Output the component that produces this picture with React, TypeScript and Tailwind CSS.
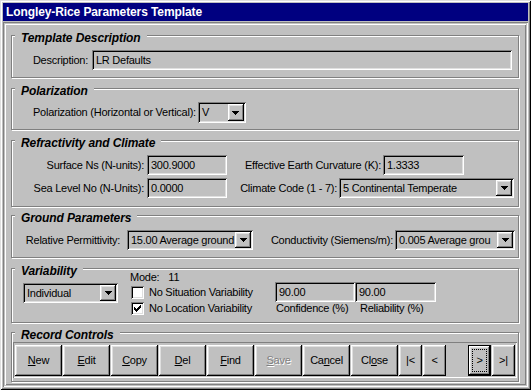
import React from 'react';

// win95 bevels
const raised = 'shadow-[inset_-1px_-1px_#000,inset_1px_1px_#fff,inset_-2px_-2px_#808080,inset_2px_2px_#dfdfdf]';
const sunken = 'shadow-[inset_1px_1px_#808080,inset_-1px_-1px_#fff,inset_2px_2px_#000,inset_-2px_-2px_#dfdfdf]';

function Arrow() {
  return (
    <svg width="7" height="4" viewBox="0 0 7 4" shapeRendering="crispEdges">
      <path d="M0 0h7v1h-7z M1 1h5v1h-5z M2 2h3v1h-3z M3 3h1v1h-1z" fill="#000" />
    </svg>
  );
}

function Field({ value, className = '' }: { value: string; className?: string }) {
  return (
    <div className={`${sunken} h-[20px] bg-[#c0c0c0] pl-[4px] pr-[2px] flex items-center whitespace-nowrap overflow-hidden ${className}`}>
      {value}
    </div>
  );
}

function Combo({ value, className = '' }: { value: string; className?: string }) {
  return (
    <div className={`${sunken} h-[20px] bg-[#c0c0c0] p-[2px] flex items-center ${className}`}>
      <span className="flex-1 pl-[2px] whitespace-nowrap overflow-hidden">{value}</span>
      <span className={`${raised} w-[16px] h-full bg-[#c0c0c0] flex items-center justify-center shrink-0`}>
        <Arrow />
      </span>
    </div>
  );
}

function Check({ checked }: { checked?: boolean }) {
  return (
    <span className={`${sunken} w-[13px] h-[13px] bg-white flex items-center justify-center shrink-0`}>
      {checked && (
        <svg width="7" height="7" viewBox="0 0 7 7" shapeRendering="crispEdges">
          <path
            d="M6 0h1v1h-1z M5 1h2v1h-2z M0 2h1v1h-1z M4 2h3v1h-3z M0 3h2v1h-2z M3 3h3v1h-3z M0 4h5v1h-5z M1 5h3v1h-3z M2 6h1v1h-1z"
            fill="#000"
          />
        </svg>
      )}
    </span>
  );
}

function Group({ title, className, children }: { title: string; className: string; children: React.ReactNode }) {
  return (
    <div className={`relative border border-[#808080] shadow-[inset_1px_1px_#fff,1px_1px_#fff] ${className}`}>
      <span className="absolute left-[3px] top-[-5px] px-[6px] bg-[#c0c0c0] text-[12px] leading-[14px] font-bold italic tracking-[-0.1px]">
        {title}
      </span>
      {children}
    </div>
  );
}

function Btn({ children, className = 'w-[47px]', disabled, focused }: { children: React.ReactNode; className?: string; disabled?: boolean; focused?: boolean }) {
  if (focused) {
    return (
      <div className={`${className} h-[31px] border border-black bg-[#c0c0c0] flex`}>
        <div className={`${raised} flex-1 p-[3px] flex`}>
          <div className="flex-1 border border-dotted border-black flex items-center justify-center">{children}</div>
        </div>
      </div>
    );
  }
  return (
    <div
      className={`${className} ${raised} h-[31px] bg-[#c0c0c0] flex items-center justify-center ${
        disabled ? 'text-[#808080] [text-shadow:1px_1px_#fff]' : ''
      }`}
    >
      {children}
    </div>
  );
}

export default function App() {
  return (
    <div className="w-[531px] h-[390px] bg-[#c0c0c0] p-[3px] shadow-[inset_1px_1px_#dfdfdf,inset_-1px_-1px_#000,inset_2px_2px_#fff,inset_-2px_-2px_#808080] font-['Liberation_Sans',Arial,sans-serif] text-[11px] leading-[13px] tracking-[-0.25px] text-black select-none">
      {/* title bar */}
      <div className="h-[18px] bg-[#000080] text-white text-[12px] font-bold tracking-[-0.1px] pl-[3px] flex items-center">
        Longley-Rice Parameters Template
      </div>

      {/* body */}
      <div className="mt-[1px] h-[365px] shadow-[inset_1px_1px_#808080,inset_-1px_-1px_#fff] p-[2px]">
        <div className="h-full shadow-[inset_1px_1px_#fff,inset_-1px_-1px_#808080] pl-[6px] pr-[7px] pt-[11px] flex flex-col">
          <Group title="Template Description" className="h-[43px]">
            <div className="mt-[14px] flex items-center justify-end gap-[4px] pr-[6px]">
              <span>Description:</span>
              <Field value="LR Defaults" className="w-[420px]" />
            </div>
          </Group>

          <Group title="Polarization" className="h-[42px] mt-[10px]">
            <div className="mt-[13px] pl-[21px] flex items-center gap-[2px]">
              <span>Polarization (Horizontal or Vertical):</span>
              <Combo value="V" className="w-[48px] h-[21px]" />
            </div>
          </Group>

          <Group title="Refractivity and Climate" className="h-[67px] mt-[10px]">
            <div className="mt-[14px] flex items-center">
              <span className="w-[132px] text-right">Surface Ns (N-units):</span>
              <Field value="300.9000" className="ml-[3px] w-[80px]" />
              <span className="w-[154px] text-right">Effective Earth Curvature (K):</span>
              <Field value="1.3333" className="ml-[2px] w-[81px]" />
            </div>
            <div className="mt-[3px] flex items-center">
              <span className="w-[132px] text-right">Sea Level No (N-Units):</span>
              <Field value="0.0000" className="ml-[3px] w-[80px]" />
              <span className="w-[110px] text-right">Climate Code (1 - 7):</span>
              <Combo value="5 Continental Temperate" className="ml-[2px] w-[175px]" />
            </div>
          </Group>

          <Group title="Ground Parameters" className="h-[43px] mt-[8px]">
            <div className="mt-[14px] flex items-center">
              <span className="w-[108px] text-right">Relative Permittivity:</span>
              <Combo value="15.00 Average ground" className="ml-[7px] w-[126px]" />
              <span className="w-[140px] text-right">Conductivity (Siemens/m):</span>
              <Combo value="0.005 Average grou" className="ml-[2px] w-[120px]" />
            </div>
          </Group>

          <Group title="Variability" className="h-[55px] mt-[10px]">
            <div className="flex">
              <Combo value="Individual" className="ml-[11px] mt-[14px] w-[95px]" />
              <div className="ml-[12px] w-[145px] mt-[2px] flex flex-col">
                <div className="flex gap-[9px]">
                  <span>Mode:</span>
                  <span>11</span>
                </div>
                <div className="mt-[2px] ml-[1px] flex items-center gap-[5px]">
                  <Check />
                  <span>No Situation Variability</span>
                </div>
                <div className="mt-[3px] ml-[1px] flex items-center gap-[5px]">
                  <Check checked />
                  <span>No Location Variability</span>
                </div>
              </div>
              <div className="mt-[13px] flex flex-col">
                <div className="flex">
                  <Field value="90.00" className="w-[80px]" />
                  <Field value="90.00" className="w-[81px]" />
                </div>
                <div className="flex">
                  <span className="w-[80px] pl-[1px]">Confidence (%)</span>
                  <span className="pl-[5px]">Reliability (%)</span>
                </div>
              </div>
            </div>
          </Group>

          <Group title="Record Controls" className="h-[50px] mt-[9px]">
            <div className="mt-[9px] ml-[1px] w-[504px] h-[36px] shadow-[inset_1px_1px_#808080,inset_-1px_-1px_#fff] pl-[2px] pt-[3px] flex gap-[1px]">
              <Btn><span><u>N</u>ew</span></Btn>
              <Btn><span><u>E</u>dit</span></Btn>
              <Btn><span><u>C</u>opy</span></Btn>
              <Btn><span><u>D</u>el</span></Btn>
              <Btn><span><u>F</u>ind</span></Btn>
              <Btn disabled><span><u>S</u>ave</span></Btn>
              <Btn><span>Ca<u>n</u>cel</span></Btn>
              <Btn><span>Cl<u>o</u>se</span></Btn>
              <Btn className="w-[23px]">|&lt;</Btn>
              <Btn className="w-[23px]">&lt;</Btn>
              <div className="w-[20px]" />
              <Btn className="w-[23px]" focused>&gt;</Btn>
              <Btn className="w-[23px]">&gt;|</Btn>
            </div>
          </Group>
        </div>
      </div>
    </div>
  );
}
